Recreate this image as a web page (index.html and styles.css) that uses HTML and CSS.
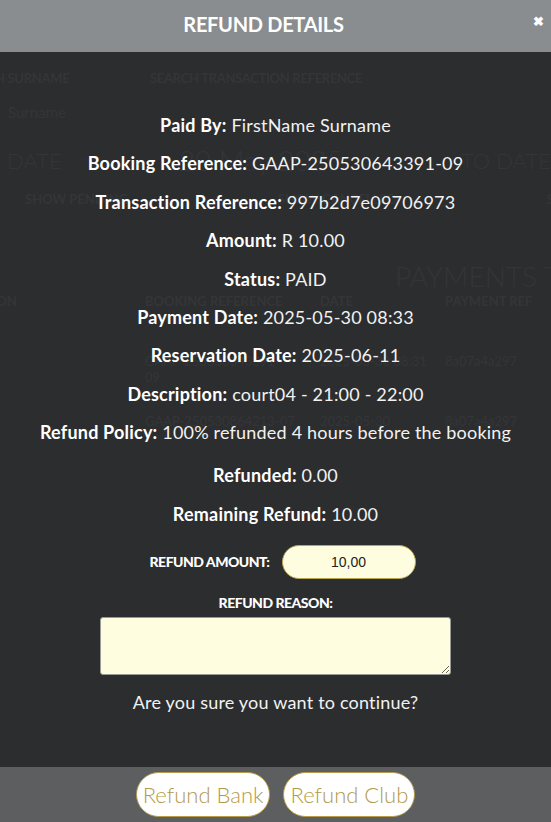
FILE: index.html
```html
<!DOCTYPE html>
<html lang="en">

<head>
    <meta charset="UTF-8">
    <meta name="viewport" content="width=device-width, initial-scale=1.0">
    <title>Refund Details</title>
    <link rel="stylesheet" href="styles.css">
</head>

<body>
    <!-- page underneath the modal -->
    <div class="page">
        <div class="filters">
            <div class="field">
                <p class="flabel">SEARCH SURNAME</p>
                <p class="fvalue">Surname</p>
            </div>
            <div class="field">
                <p class="flabel">SEARCH TRANSACTION REFERENCE</p>
            </div>
        </div>
        <div class="dates">
            <span class="big">FROM DATE</span>
            <svg class="cal" width="38" height="32" viewBox="0 0 38 32">
                <rect x="2" y="5" width="34" height="25" rx="2" fill="none" stroke="currentColor" stroke-width="3" />
                <path d="M2 12h34M13 12v18M24 12v18M2 20h34" stroke="currentColor" stroke-width="2" />
                <path d="M10 1v7M28 1v7" stroke="currentColor" stroke-width="3" />
            </svg>
            <span class="huge">20 May 2025</span>
            <span class="big">TO DATE</span>
        </div>
        <div class="toggles">
            <span>SHOW PENDING</span>
            <span>SHOW CANCELLED</span>
            <span>SHOW</span>
        </div>
        <p class="ptitle">PAYMENTS TODAY</p>
        <div class="table">
            <span class="th">TRANSACTION<br>REFERENCE</span>
            <span class="th">BOOKING REFERENCE</span>
            <span class="th">DATE</span>
            <span class="th">PAYMENT REF</span>
            <span>e09706973</span>
            <span>GAAP-250530643391-<br>09</span>
            <span>2025-05-30 08:31</span>
            <span>8a07a4a297</span>
            <span>ebfc9c6c5</span>
            <span>GAAP-250530864213-07</span>
            <span>2025-05-30</span>
            <span>8a07a4a297</span>
        </div>
    </div>

    <div class="modal">
        <div class="head">
            <h1 class="title">REFUND DETAILS</h1>
            <span class="close">&#10006;</span>
        </div>
        <div class="content">
            <div class="details">
                <p><b>Paid By:</b> FirstName Surname</p>
                <p><b>Booking Reference:</b> GAAP-250530643391-09</p>
                <p><b>Transaction Reference:</b> 997b2d7e09706973</p>
                <p><b>Amount:</b> R 10.00</p>
                <p><b>Status:</b> PAID</p>
                <p><b>Payment Date:</b> 2025-05-30 08:33</p>
                <p><b>Reservation Date:</b> 2025-06-11</p>
                <p><b>Description:</b> court04 - 21:00 - 22:00</p>
                <p><b>Refund Policy:</b> 100% refunded 4 hours before the booking</p>
            </div>
            <div class="details totals">
                <p><b>Refunded:</b> 0.00</p>
                <p><b>Remaining Refund:</b> 10.00</p>
            </div>
            <div class="amount">
                <label class="lbl">REFUND AMOUNT:</label>
                <input class="amt" type="text" value="10,00">
            </div>
            <label class="lbl">REFUND REASON:</label>
            <textarea class="reason"></textarea>
            <p class="confirm">Are you sure you want to continue?</p>
        </div>
        <div class="foot">
            <button class="btn">Refund Bank</button>
            <button class="btn">Refund Club</button>
        </div>
    </div>
</body>

</html>
```

FILE: styles.css
```css
* {
    padding: 0px;
    margin: 0px;
    box-sizing: border-box;
}

body {
    width: 551px;
    height: 822px;
    overflow: hidden;
    background-color: #2c2d2f;
    font-family: Lato, "Liberation Sans", sans-serif;
    position: relative;
}

/* ghost page under the overlay */
.page {
    color: #343538;
    padding-top: 70px;
    white-space: nowrap;
}

.filters {
    display: grid;
    grid-template-columns: 150px 1fr;
}

.field:first-child {
    margin-left: -44px;
}

.flabel {
    font-size: 13px;
    font-weight: bold;
    letter-spacing: -0.3px;
}

.fvalue {
    font-size: 15px;
    margin-top: 17px;
    padding-left: 52px;
}

.dates {
    display: flex;
    align-items: center;
    gap: 18px;
    margin-left: -62px;
    margin-top: 22px;
}

.big {
    font-size: 22px;
    font-weight: 300;
}

.huge {
    font-size: 28px;
    font-weight: 300;
    margin-left: 75px;
    margin-right: 100px;
}

.toggles {
    display: flex;
    gap: 150px;
    font-size: 13px;
    font-weight: bold;
    margin-top: 14px;
    padding-left: 25px;
}

.ptitle {
    font-size: 28px;
    font-weight: 300;
    margin-top: 52px;
    padding-left: 395px;
}

.table {
    display: grid;
    grid-template-columns: 145px 175px 125px 140px;
    row-gap: 28px;
    font-size: 13px;
}

.table span:nth-child(4n+1) {
    margin-left: -75px;
}

.th {
    font-weight: bold;
}

/* modal */
.modal {
    position: absolute;
    inset: 0;
    display: flex;
    flex-direction: column;
}

.head {
    height: 52px;
    background-color: #8a8d90;
    display: flex;
    justify-content: center;
    align-items: center;
    padding-right: 24px;
    padding-bottom: 4px;
    position: relative;
}

.title {
    color: white;
    font-size: 20px;
    font-weight: bold;
    letter-spacing: -0.3px;
}

.close {
    position: absolute;
    right: 7px;
    top: 13px;
    color: white;
    font-size: 13px;
    font-weight: bold;
}

.content {
    flex: 1;
    display: flex;
    flex-direction: column;
    align-items: center;
    padding-top: 62px;
    color: #f2f2f2;
}

.details {
    display: flex;
    flex-direction: column;
    align-items: center;
    gap: 16.4px;
    font-size: 18px;
    line-height: 22px;
    letter-spacing: 0.2px;
}

.details b {
    color: white;
}

.totals {
    margin-top: 21px;
}

.amount {
    display: flex;
    align-items: center;
    gap: 12px;
    margin-top: 20px;
    margin-left: 14px;
}

.lbl {
    color: white;
    font-size: 14px;
    font-weight: 900;
    letter-spacing: -0.5px;
}

.amt {
    width: 134px;
    height: 34px;
    border-radius: 17px;
    border: 1px solid #b9a450;
    background-color: #fefde0;
    text-align: center;
    font-family: Arial, "Liberation Sans", sans-serif;
    font-size: 14px;
    color: #222;
}

.reason {
    width: 351px;
    height: 58px;
    margin-top: 6px;
    border-radius: 3px;
    border: 1px solid #999;
    background-color: #fefde0;
}

.content > .lbl {
    margin-top: 15px;
}

.confirm {
    margin-top: 16px;
    font-size: 18px;
    letter-spacing: 0.2px;
    color: #f2f2f2;
}

.foot {
    height: 55px;
    background-color: #5c5e60;
    display: flex;
    justify-content: center;
    align-items: center;
    gap: 13px;
}

.btn {
    height: 45px;
    padding: 0px 6px;
    border-radius: 23px;
    border: 1px solid #b59b4a;
    background-color: white;
    color: #b39a48;
    font-family: Lato, sans-serif;
    font-size: 22px;
    font-weight: 300;
    cursor: pointer;
}
```
